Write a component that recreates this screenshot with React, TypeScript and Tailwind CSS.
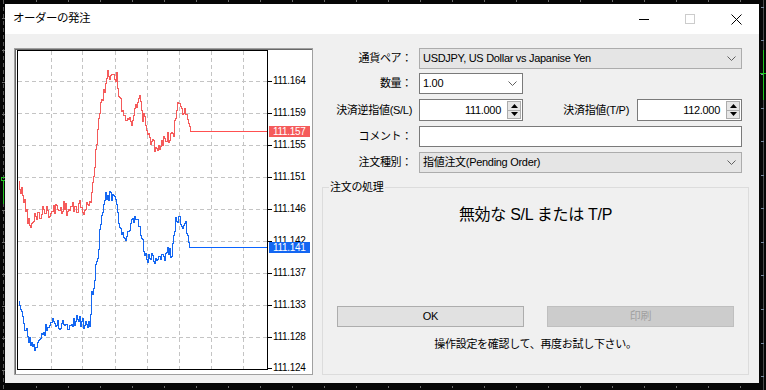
import React from "react";

type Pt = [number, number];

const redKeys: Pt[] = [
  [19, 182], [21, 190], [24, 198], [27, 214], [30, 228], [33, 224], [36, 215], [40, 216],
  [44, 210], [48, 212], [52, 214], [56, 207], [60, 211], [64, 206], [68, 212], [72, 207],
  [76, 210], [80, 206], [84, 212], [88, 205], [91, 206], [92, 188], [94, 175], [96, 152],
  [98, 130], [100, 113], [102, 102], [105, 88], [107, 76], [110, 75], [114, 74], [117, 78],
  [120, 100], [123, 110], [126, 118], [129, 123], [133, 122], [136, 110], [138, 103],
  [140, 98], [142, 116], [145, 120], [148, 137], [151, 140], [154, 145], [157, 152],
  [160, 150], [164, 140], [167, 137], [171, 138], [174, 134], [177, 106], [179, 104],
  [182, 112], [186, 112], [189, 122], [191, 132],
];

const blueKeys: Pt[] = [
  [19, 302], [21, 310], [23, 322], [26, 330], [29, 340], [32, 348], [35, 348], [38, 343],
  [41, 340], [44, 333], [47, 326], [51, 324], [55, 322], [60, 326], [64, 322], [68, 328],
  [72, 322], [76, 320], [79, 318], [82, 325], [86, 322], [90, 324], [91, 312], [92, 296],
  [94, 290], [96, 270], [98, 254], [100, 235], [102, 218], [104, 200], [106, 192],
  [108, 198], [111, 196], [115, 198], [117, 210], [120, 226], [123, 235], [126, 240],
  [130, 232], [133, 222], [136, 220], [139, 224], [142, 240], [145, 255], [148, 260],
  [152, 257], [156, 260], [160, 255], [164, 258], [168, 252], [172, 254], [174, 235],
  [176, 220], [178, 222], [180, 219], [183, 224], [186, 225], [188, 238], [190, 248],
];

const noise = (i: number, seed: number) => {
  const v = Math.sin(i * 12.9898 + seed * 78.233) * 43758.5453;
  return v - Math.floor(v);
};

// stepped tick line like the terminal draws it
const stepPath = (keys: Pt[], seed: number) => {
  let d = `M${keys[0][0]} ${keys[0][1]}`;
  let k = 0;
  const last = keys[keys.length - 1][0];
  for (let x = keys[0][0] + 1; x <= last; x += 1) {
    while (k < keys.length - 2 && x > keys[k + 1][0]) k++;
    const [x0, y0] = keys[k];
    const [x1, y1] = keys[k + 1];
    const t = Math.min(1, (x - x0) / (x1 - x0));
    let y = y0 + (y1 - y0) * t;
    if (x < last - 1) y += Math.round((noise(x, seed) - 0.5) * 11);
    d += `H${x}V${Math.round(y)}`;
  }
  return d;
};

const gridX = [52, 83, 116, 148, 180, 212, 244];
const gridY = [82, 114, 146, 178, 210, 242, 274, 306, 338];
const prices: [number, string][] = [
  [82, "111.164"], [114, "111.159"], [146, "111.155"], [178, "111.151"], [210, "111.146"],
  [242, "111.142"], [274, "111.137"], [306, "111.133"], [338, "111.128"], [369, "111.124"],
];

const Chevron = () => (
  <svg width="9" height="5" viewBox="0 0 9 5">
    <path d="M0.5 0.5 L4.5 4.5 L8.5 0.5" fill="none" stroke="#606060" strokeWidth="1" />
  </svg>
);

const Spinner = () => (
  <div className="flex h-full p-[1px]">
    <div className="flex w-[14px] flex-col border border-[#acacac] bg-[#e6e6e6]">
      <div className="flex flex-1 items-center justify-center border-b border-[#acacac]">
        <svg width="7" height="4" viewBox="0 0 7 4">
          <path d="M0 4 L3.5 0 L7 4Z" fill="#000" />
        </svg>
      </div>
      <div className="flex flex-1 items-center justify-center">
        <svg width="7" height="4" viewBox="0 0 7 4">
          <path d="M0 0 L3.5 4 L7 0Z" fill="#000" />
        </svg>
      </div>
    </div>
  </div>
);

const Chart = () => (
  <div className="h-[327px] w-[299px] border border-[#a0a0a0]">
    <div className="flex h-full w-full border-l border-t border-[#696969] bg-white pl-[1px]">
      <svg width="251" height="320" viewBox="18 51 251 320" shapeRendering="crispEdges">
        {gridX.map((x) => (
          <line key={x} x1={x + 0.5} y1={52} x2={x + 0.5} y2={370} stroke="#c4c4c4" strokeDasharray="4 3" />
        ))}
        {gridY.map((y) => (
          <line key={y} x1={19} y1={y + 0.5} x2={268} y2={y + 0.5} stroke="#c4c4c4" strokeDasharray="4 3" />
        ))}
        <path d={stepPath(redKeys, 1)} fill="none" stroke="#f55b5b" strokeWidth="1" transform="translate(0.5 0.5)" />
        <rect x="191" y="132" width="77" height="1" fill="#ff5050" />
        <path d={stepPath(blueKeys, 2)} fill="none" stroke="#1467f2" strokeWidth="1" transform="translate(0.5 0.5)" />
        <rect x="190" y="248" width="78" height="1" fill="#0a64ff" />
        <rect x="18.5" y="51.5" width="250" height="319" fill="none" stroke="#000" strokeWidth="1" />
      </svg>
      <div className="relative h-[320px] flex-1 font-['Liberation_Sans',sans-serif] text-[10px] tracking-[-0.3px] text-black">
        {prices.map(([y, p]) => (
          <div key={p}>
            <div className="absolute left-0 h-px w-[4px] bg-black" style={{ top: y - 51 }} />
            <div className="absolute left-[5px] leading-[12px]" style={{ top: y - 51 - 6 }}>
              {p}
            </div>
          </div>
        ))}
        <div className="absolute left-[1px] top-[76px] h-[11px] w-[41px] bg-[#f55b5b] pl-[4px] leading-[11px] text-white">
          111.157
        </div>
        <div className="absolute left-[1px] top-[192px] h-[11px] w-[41px] bg-[#1467f2] pl-[4px] leading-[11px] text-white">
          111.141
        </div>
      </div>
    </div>
  </div>
);

const Backdrop = () => (
  <svg className="absolute left-0 top-0" width="766" height="390" shapeRendering="crispEdges">
    <line x1="3.5" y1="0" x2="3.5" y2="390" stroke="#5a5a5a" strokeDasharray="4 3" />
    {[18, 50, 82, 114, 146, 210, 242, 274, 306, 338, 370].map((y) => (
      <line key={y} x1="2" y1={y + 0.5} x2="5" y2={y + 0.5} stroke="#6b6b6b" />
    ))}
    <line x1="3.5" y1="180" x2="3.5" y2="204" stroke="#22c322" />
    <rect x="1.5" y="177.5" width="4" height="3" fill="none" stroke="#22c322" />
    <line x1="763.5" y1="0" x2="763.5" y2="390" stroke="#4a4a4a" />
    {[7, 40, 74, 108, 141, 175, 208, 242, 275, 309, 343, 376].map((y) => (
      <line key={y} x1="761" y1={y + 0.5} x2="764" y2={y + 0.5} stroke="#7a8aa0" />
    ))}
    <line x1="763.5" y1="50" x2="763.5" y2="100" stroke="#22c322" />
    <line x1="760" y1="73.5" x2="766" y2="73.5" stroke="#22c322" />
    {[36, 68, 100, 132, 164, 196, 228, 260, 292, 324, 356, 388, 420, 452, 484, 516, 548, 580, 612, 644, 676, 708, 740].map(
      (x) => (
        <g key={x}>
          <line x1={x + 0.5} y1="0" x2={x + 0.5} y2="2" stroke="#6b6b6b" />
          <line x1={x + 0.5} y1="386" x2={x + 0.5} y2="388" stroke="#6b6b6b" />
        </g>
      )
    )}
  </svg>
);

export default function App() {
  return (
    <div className="relative h-[390px] w-[766px] overflow-hidden bg-[#060606] pl-[5px] pt-[4px] font-['Liberation_Sans','Noto_Sans_CJK_JP',sans-serif] text-[11px] tracking-[-0.3px] text-black">
      <Backdrop />
      <div className="relative flex h-[379px] w-[754px] flex-col bg-[#f0f0f0]">
        {/* title bar */}
        <div className="flex h-[30px] items-center bg-white">
          <div className="flex-1 pl-[8px] text-[11.5px] tracking-[-0.5px]">オーダーの発注</div>
          <div className="flex h-full w-[46px] items-center justify-center">
            <div className="h-px w-[10px] bg-black" />
          </div>
          <div className="flex h-full w-[46px] items-center justify-center">
            <div className="h-[10px] w-[10px] border border-[#cccccc]" />
          </div>
          <div className="flex h-full w-[46px] items-center justify-center">
            <svg width="11" height="11" viewBox="0 0 11 11">
              <path d="M0.5 0.5 L10.5 10.5 M10.5 0.5 L0.5 10.5" stroke="#000" strokeWidth="1" />
            </svg>
          </div>
        </div>

        {/* body */}
        <div className="flex flex-1 pl-[9px] pt-[14px]">
          <Chart />

          <div className="ml-[9px] flex w-[426px] flex-col">
            <div className="flex h-[21px] items-center">
              <div className="w-[90px] text-right">通貨ペア：</div>
              <div className="ml-[7px] flex h-full w-[323px] items-center justify-between border border-[#acacac] bg-[#e5e5e5] pl-[3px] pr-[5px]">
                <span>USDJPY, US Dollar vs Japanise Yen</span>
                <Chevron />
              </div>
            </div>

            <div className="mt-[4px] flex h-[21px] items-center">
              <div className="w-[90px] text-right">数量：</div>
              <div className="ml-[7px] flex h-full w-[104px] items-center justify-between border border-[#7a7a7a] bg-white pl-[3px] pr-[5px]">
                <span>1.00</span>
                <Chevron />
              </div>
            </div>

            <div className="mt-[5px] flex h-[22px] items-center">
              <div className="w-[90px] text-right">決済逆指値(S/L)</div>
              <div className="ml-[7px] flex h-full w-[104px] items-center border border-[#7a7a7a] bg-white">
                <span className="flex-1 pr-[5px] text-right">111.000</span>
                <Spinner />
              </div>
              <div className="w-[106px] text-right">決済指値(T/P)</div>
              <div className="ml-[8px] flex h-full w-[105px] items-center border border-[#7a7a7a] bg-white">
                <span className="flex-1 pr-[5px] text-right">112.000</span>
                <Spinner />
              </div>
            </div>

            <div className="mt-[5px] flex h-[21px] items-center">
              <div className="w-[90px] text-right">コメント：</div>
              <div className="ml-[7px] h-full w-[323px] border border-[#7a7a7a] bg-white" />
            </div>

            <div className="mt-[5px] flex h-[21px] items-center">
              <div className="w-[90px] text-right">注文種別：</div>
              <div className="ml-[7px] flex h-full w-[323px] items-center justify-between border border-[#acacac] bg-[#e5e5e5] pl-[3px] pr-[5px]">
                <span>指値注文(Pending Order)</span>
                <Chevron />
              </div>
            </div>

            {/* group box */}
            <div className="relative mt-[14px] flex h-[188px] w-[427px] flex-col border border-[#dcdcdc] pt-[17px] pb-[22px]">
              <span className="absolute left-[6px] top-[-9px] bg-[#f0f0f0] px-[1px] leading-[16px]">注文の処理</span>
              <div className="text-center text-[16px] leading-[20px]">無効な S/L または T/P</div>
              <div className="mt-auto flex justify-between pl-[14px] pr-[14px]">
                <div className="flex h-[21px] w-[187px] items-center justify-center border border-[#adadad] bg-[#e1e1e1]">
                  OK
                </div>
                <div className="flex h-[21px] w-[187px] items-center justify-center border border-[#bfbfbf] bg-[#cccccc] text-[#a0a0a0]">
                  印刷
                </div>
              </div>
              <div className="mt-[9px] text-center leading-[16px]">操作設定を確認して、再度お試し下さい。</div>
            </div>
          </div>
        </div>
      </div>
    </div>
  );
}
